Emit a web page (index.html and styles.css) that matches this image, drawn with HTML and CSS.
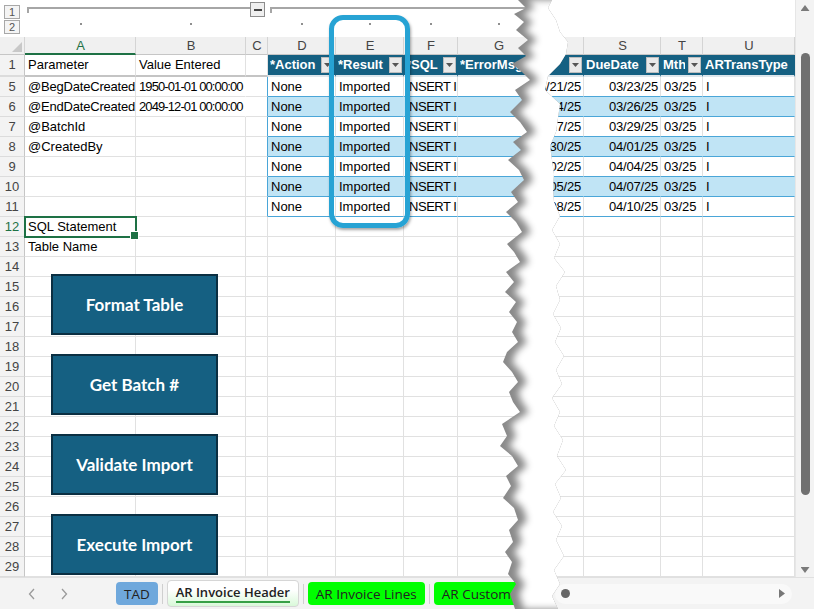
FILE: index.html
```html
<!DOCTYPE html>
<html lang="en">
<head>
<meta charset="UTF-8">
<meta name="viewport" content="width=device-width, initial-scale=1.0">
<title>AR Invoice Header</title>
<link rel="stylesheet" href="styles.css">
</head>
<body>

<div class="app">
  <div class="main">
    <div class="left">

      <div class="outline cols">
        <div class="levels"><span class="lvl">1</span><span class="lvl">2</span></div>
        <div class="bracket b-ab"></div>
        <div class="collapse"><span></span></div>
        <div class="bracket b-dg"></div>
        <div class="dot d-a"></div>
        <div class="dot d-b"></div>
        <div class="dot d-d"></div>
        <div class="dot d-e"></div>
        <div class="dot d-f"></div>
        <div class="dot d-g"></div>
      </div>

      <div class="sheet">
        <div class="row cols colhead">
          <div class="corner"><span></span></div>
          <div class="on">A</div><div>B</div><div>C</div><div>D</div><div>E</div><div>F</div><div>G</div><div>R</div><div>S</div><div>T</div><div>U</div>
        </div>

        <div class="row cols r1">
          <div class="rh">1</div><div>Parameter</div><div>Value Entered</div><div></div>
          <div class="th"><span class="tx">*Action</span><span class="dd"></span></div>
          <div class="th"><span class="tx">*Result</span><span class="dd"></span></div>
          <div class="th"><span class="tx">*SQL</span><span class="dd"></span></div>
          <div class="th"><span class="tx">*ErrorMsg</span><span class="dd"></span></div>
          <div class="th"><span class="tx"></span><span class="dd"></span></div>
          <div class="th"><span class="tx">DueDate</span><span class="dd"></span></div>
          <div class="th"><span class="tx">Mth</span><span class="dd"></span></div>
          <div class="th"><span class="tx">ARTransType</span></div>
        </div>

        <div class="row cols">
          <div class="rh">5</div><div class="fit">@BegDateCreated</div><div class="spill">1950-01-01 00:00:00</div><div class="edge"></div>
          <div class="t">None</div><div class="t">Imported</div><div class="t sql">INSERT INTO ARInvoiceHeader</div><div class="t"></div>
          <div class="t n">03/21/25</div><div class="t n">03/23/25</div><div class="t">03/25</div><div class="t">I</div>
        </div>
        <div class="row cols band">
          <div class="rh">6</div><div class="fit">@EndDateCreated</div><div class="spill">2049-12-01 00:00:00</div><div class="edge"></div>
          <div class="t">None</div><div class="t">Imported</div><div class="t sql">INSERT INTO ARInvoiceHeader</div><div class="t"></div>
          <div class="t n">03/24/25</div><div class="t n">03/26/25</div><div class="t">03/25</div><div class="t">I</div>
        </div>
        <div class="row cols">
          <div class="rh">7</div><div>@BatchId</div><div></div><div class="edge"></div>
          <div class="t">None</div><div class="t">Imported</div><div class="t sql">INSERT INTO ARInvoiceHeader</div><div class="t"></div>
          <div class="t n">03/27/25</div><div class="t n">03/29/25</div><div class="t">03/25</div><div class="t">I</div>
        </div>
        <div class="row cols band">
          <div class="rh">8</div><div>@CreatedBy</div><div></div><div class="edge"></div>
          <div class="t">None</div><div class="t">Imported</div><div class="t sql">INSERT INTO ARInvoiceHeader</div><div class="t"></div>
          <div class="t n">03/30/25</div><div class="t n">04/01/25</div><div class="t">03/25</div><div class="t">I</div>
        </div>
        <div class="row cols">
          <div class="rh">9</div><div></div><div></div><div class="edge"></div>
          <div class="t">None</div><div class="t">Imported</div><div class="t sql">INSERT INTO ARInvoiceHeader</div><div class="t"></div>
          <div class="t n">04/02/25</div><div class="t n">04/04/25</div><div class="t">03/25</div><div class="t">I</div>
        </div>
        <div class="row cols band">
          <div class="rh">10</div><div></div><div></div><div class="edge"></div>
          <div class="t">None</div><div class="t">Imported</div><div class="t sql">INSERT INTO ARInvoiceHeader</div><div class="t"></div>
          <div class="t n">04/05/25</div><div class="t n">04/07/25</div><div class="t">03/25</div><div class="t">I</div>
        </div>
        <div class="row cols">
          <div class="rh">11</div><div></div><div></div><div class="edge"></div>
          <div class="t">None</div><div class="t">Imported</div><div class="t sql">INSERT INTO ARInvoiceHeader</div><div class="t"></div>
          <div class="t n">04/08/25</div><div class="t n">04/10/25</div><div class="t">03/25</div><div class="t">I</div>
        </div>

        <div class="row cols"><div class="rh on">12</div><div class="sel">SQL Statement</div><div></div><div></div><div></div><div></div><div></div><div></div><div></div><div></div><div></div><div></div></div>
        <div class="row cols"><div class="rh">13</div><div>Table Name</div><div></div><div></div><div></div><div></div><div></div><div></div><div></div><div></div><div></div><div></div></div>
        <div class="row cols"><div class="rh">14</div><div></div><div></div><div></div><div></div><div></div><div></div><div></div><div></div><div></div><div></div><div></div></div>
        <div class="row cols"><div class="rh">15</div><div></div><div></div><div></div><div></div><div></div><div></div><div></div><div></div><div></div><div></div><div></div></div>
        <div class="row cols"><div class="rh">16</div><div></div><div></div><div></div><div></div><div></div><div></div><div></div><div></div><div></div><div></div><div></div></div>
        <div class="row cols"><div class="rh">17</div><div></div><div></div><div></div><div></div><div></div><div></div><div></div><div></div><div></div><div></div><div></div></div>
        <div class="row cols"><div class="rh">18</div><div></div><div></div><div></div><div></div><div></div><div></div><div></div><div></div><div></div><div></div><div></div></div>
        <div class="row cols"><div class="rh">19</div><div></div><div></div><div></div><div></div><div></div><div></div><div></div><div></div><div></div><div></div><div></div></div>
        <div class="row cols"><div class="rh">20</div><div></div><div></div><div></div><div></div><div></div><div></div><div></div><div></div><div></div><div></div><div></div></div>
        <div class="row cols"><div class="rh">21</div><div></div><div></div><div></div><div></div><div></div><div></div><div></div><div></div><div></div><div></div><div></div></div>
        <div class="row cols"><div class="rh">22</div><div></div><div></div><div></div><div></div><div></div><div></div><div></div><div></div><div></div><div></div><div></div></div>
        <div class="row cols"><div class="rh">23</div><div></div><div></div><div></div><div></div><div></div><div></div><div></div><div></div><div></div><div></div><div></div></div>
        <div class="row cols"><div class="rh">24</div><div></div><div></div><div></div><div></div><div></div><div></div><div></div><div></div><div></div><div></div><div></div></div>
        <div class="row cols"><div class="rh">25</div><div></div><div></div><div></div><div></div><div></div><div></div><div></div><div></div><div></div><div></div><div></div></div>
        <div class="row cols"><div class="rh">26</div><div></div><div></div><div></div><div></div><div></div><div></div><div></div><div></div><div></div><div></div><div></div></div>
        <div class="row cols"><div class="rh">27</div><div></div><div></div><div></div><div></div><div></div><div></div><div></div><div></div><div></div><div></div><div></div></div>
        <div class="row cols"><div class="rh">28</div><div></div><div></div><div></div><div></div><div></div><div></div><div></div><div></div><div></div><div></div><div></div></div>
        <div class="row cols"><div class="rh">29</div><div></div><div></div><div></div><div></div><div></div><div></div><div></div><div></div><div></div><div></div><div></div></div>

        <!-- macro buttons float over the grid -->
        <div class="shapes">
          <div class="btn">Format Table</div>
          <div class="btn">Get Batch #</div>
          <div class="btn">Validate Import</div>
          <div class="btn">Execute Import</div>
        </div>
      </div>
    </div>

    <div class="vscroll">
      <span class="arrow-up"></span>
      <span class="thumb"></span>
      <span class="arrow-down"></span>
    </div>
  </div>

  <div class="tabs">
    <div class="nav">
      <svg viewBox="0 0 8 12"><polyline points="6,1 1.5,6 6,11" fill="none" stroke="#9a9a9a" stroke-width="1.3"/></svg>
      <svg viewBox="0 0 8 12"><polyline points="2,1 6.5,6 2,11" fill="none" stroke="#9a9a9a" stroke-width="1.3"/></svg>
    </div>
    <div class="tab tad">TAD</div>
    <span class="sep"></span>
    <div class="tab active"><span class="label">AR Invoice Header</span></div>
    <span class="sep"></span>
    <div class="tab green">AR Invoice Lines</div>
    <span class="sep"></span>
    <div class="tab green">AR Customers</div>
    <div class="hscroll">
      <span class="knob"></span>
      <span class="arrow-right"></span>
    </div>
  </div>

  <div class="focus-ring"></div>

  <svg class="tear" width="90" height="609" viewBox="0 0 90 609">
    <defs>
      <clipPath id="gap">
        <path id="gapShape" d="M28,0 L36,8 L24,14 L34,22 L26,30 L38,40 L28,48 L36,56 L22,64 L32,72 L40,80 L25,90 L32,100 L20,112 L30,122 L37,132 L23,142 L31,150 L18,160 L29,170 L34,180 L21,192 L28,202 L16,212 L26,222 L32,232 L17,244 L24,252 L30,262 L16,272 L24,282 L15,292 L26,302 L19,312 L27,322 L22,332 L28,342 L17,352 L13,362 L22,372 L28,382 L19,392 L23,402 L30,412 L12,424 L17,436 L10,446 L22,456 L28,466 L16,476 L21,486 L13,498 L24,508 L28,520 L19,530 L23,542 L15,552 L22,562 L18,574 L26,584 L20,594 L25,609 L68,609 L62,596 L70,584 L64,570 L74,556 L66,540 L72,526 L63,512 L71,498 L65,484 L76,470 L67,456 L73,440 L64,426 L70,412 L62,398 L72,384 L66,370 L74,356 L65,342 L71,328 L63,314 L70,300 L66,286 L75,272 L64,258 L70,244 L62,230 L70,216 L64,202 L63,188 L64,174 L62,160 L60,146 L66,132 L68,118 L70,104 L55,90 L58,76 L70,64 L76,54 L78,42 L70,32 L66,20 L58,8 L62,0 Z"/>
      </clipPath>
      <filter id="soft" x="-50%" y="-5%" width="200%" height="110%">
        <feGaussianBlur stdDeviation="3.5"/>
      </filter>
    </defs>
    <use href="#gapShape" fill="#8a8a8a"/>
    <g clip-path="url(#gap)">
      <path fill="#fff" filter="url(#soft)" d="M37,0 L45,8 L33,14 L43,22 L35,30 L47,40 L37,48 L45,56 L31,64 L41,72 L49,80 L34,90 L41,100 L29,112 L39,122 L46,132 L32,142 L40,150 L27,160 L38,170 L43,180 L30,192 L37,202 L25,212 L35,222 L41,232 L26,244 L33,252 L39,262 L25,272 L33,282 L24,292 L35,302 L28,312 L36,322 L31,332 L37,342 L26,352 L22,362 L31,372 L37,382 L28,392 L32,402 L39,412 L21,424 L26,436 L19,446 L31,456 L37,466 L25,476 L30,486 L22,498 L33,508 L37,520 L28,530 L32,542 L24,552 L31,562 L27,574 L35,584 L29,594 L34,609 L95,609 L95,0 Z"/>
    </g>
  </svg>
</div>

</body>
</html>
```

FILE: styles.css
```css
* {
  box-sizing: border-box;
}
body {
  margin: 0;
  background: #fff;
  font-family: "Liberation Sans", Arial, sans-serif;
}
.app {
  position: relative;
  width: 814px;
  height: 609px;
  overflow: hidden;
  display: flex;
  flex-direction: column;
}
.main {
  display: flex;
  height: 577px;
}
.left {
  width: 795px;
  display: flex;
  flex-direction: column;
}
.cols {
  display: grid;
  grid-template-columns: 25px 111px 110px 22px 68px 68px 54px 82px 44px 77px 42px 92px;
}

/* outline (grouping) strip */
.outline {
  height: 37px;
  grid-template-rows: 18px 19px;
}
.levels {
  grid-row: 1 / 3;
  grid-column: 1;
  display: flex;
  flex-direction: column;
  gap: 1px;
  padding: 5px 0 0 4px;
}
.lvl {
  width: 16px;
  height: 14px;
  border: 1px solid #a8a8a8;
  background: #f4f4f4;
  color: #555;
  font-size: 11px;
  line-height: 12px;
  text-align: center;
}
.bracket {
  grid-row: 1;
  margin-top: 7px;
  height: 6px;
  border-top: 2px solid #a6a6a6;
  border-left: 2px solid #a6a6a6;
}
.b-ab {
  grid-column: 2 / 4;
  margin-left: 2px;
  margin-right: -4px;
}
.b-dg {
  grid-column: 5 / 9;
  margin-left: 2px;
}
.collapse {
  grid-row: 1;
  grid-column: 4;
  margin: 2px 0 0 4px;
  width: 15px;
  height: 15px;
  border: 1px solid #8c8c8c;
  background: #efefef;
  display: flex;
  align-items: center;
  justify-content: center;
}
.collapse span {
  width: 8px;
  height: 2px;
  background: #444;
}
.dot {
  grid-row: 2;
  justify-self: center;
  width: 2px;
  height: 2px;
  margin-top: 5px;
  background: #8f8f8f;
}
.d-a { grid-column: 2; }
.d-b { grid-column: 3; }
.d-d { grid-column: 5; }
.d-e { grid-column: 6; }
.d-f { grid-column: 7; }
.d-g { grid-column: 8; }

/* grid */
.sheet {
  position: relative;
  height: 540px;
}
.row > div {
  height: 20px;
  padding: 0 2px 0 3px;
  border-right: 1px solid #e1e1e1;
  border-bottom: 1px solid #e1e1e1;
  font-size: 13px;
  line-height: 19px;
  white-space: nowrap;
  overflow: hidden;
  color: #000;
}
.colhead > div {
  height: 18px;
  background: #f0f0f0;
  border-right-color: #d4d4d4;
  border-bottom-color: #c6c6c6;
  text-align: center;
  font-size: 13px;
  line-height: 17px;
  color: #444;
}
.colhead > .on {
  color: #1e7145;
  border-bottom: 2px solid #1e7145;
}
.colhead > .corner {
  display: flex;
  align-items: flex-end;
  justify-content: flex-end;
  padding: 0 2px 2px 0;
}
.corner span {
  width: 10px;
  height: 10px;
  background: #c8c8c8;
  clip-path: polygon(100% 0, 100% 100%, 0 100%);
}
.row > .rh {
  padding: 0;
  background: #f3f3f3;
  color: #444;
  text-align: center;
  border-right-color: #c6c6c6;
  border-bottom-color: #dcdcdc;
}
.row > .rh.on {
  color: #1e7145;
}
.r1 > div {
  height: 22px;
  line-height: 20px;
  border-bottom: 2px solid #c4c4c4;
}
.row > .th {
  display: flex;
  align-items: center;
  gap: 3px;
  padding: 0 1px 0 2px;
  background: #156082;
  color: #fff;
  font-weight: bold;
  border-right-color: #156082;
  border-bottom-color: #dde6ec;
}
.th .tx {
  flex: 1;
  overflow: hidden;
}
.dd {
  flex: none;
  width: 13px;
  height: 16px;
  background: #e9e9e9;
  border: 1px solid #bdbdbd;
  display: flex;
  align-items: center;
  justify-content: center;
}
.dd::after {
  content: "";
  width: 7px;
  height: 4px;
  background: #555;
  clip-path: polygon(0 0, 100% 0, 50% 100%);
}
.row > .t {
  border-bottom-color: #4aa6d8;
}
.band > .t {
  background: #c0e4f5;
  border-right-color: #c0e4f5;
}
.row > .edge {
  border-right-color: #4aa6d8;
}
.row > .n {
  display: flex;
  justify-content: flex-end;
  letter-spacing: -0.2px;
}
.row > .sql {
  padding-left: 2px;
  letter-spacing: -0.5px;
}
.row > .fit {
  letter-spacing: -0.2px;
}
.row > .spill {
  overflow: visible;
  letter-spacing: -0.9px;
  border-right-color: transparent;
}
.row > .sel {
  position: relative;
  z-index: 2;
  overflow: visible;
  outline: 2px solid #1e7145;
  outline-offset: -1px;
}
.sel::after {
  content: "";
  position: absolute;
  right: -4px;
  bottom: -4px;
  width: 7px;
  height: 7px;
  background: #1e7145;
  border: 1px solid #fff;
}

/* macro buttons */
.shapes {
  position: absolute;
  left: 51px;
  top: 237px;
  display: flex;
  flex-direction: column;
  gap: 19px;
}
.btn {
  width: 167px;
  height: 61px;
  background: #156082;
  border: 2px solid #0b2f42;
  color: #fff;
  font-family: Lato, "Open Sans", sans-serif;
  font-weight: 700;
  font-size: 17px;
  display: flex;
  align-items: center;
  justify-content: center;
}

/* vertical scrollbar */
.vscroll {
  width: 19px;
  background: #f3f3f3;
  border-left: 1px solid #e6e6e6;
  display: flex;
  flex-direction: column;
  align-items: center;
}
.arrow-up {
  margin-top: 5px;
  width: 9px;
  height: 6px;
  background: #7a7a7a;
  clip-path: polygon(50% 0, 100% 100%, 0 100%);
}
.thumb {
  margin-top: 42px;
  width: 9px;
  height: 442px;
  border-radius: 5px;
  background: #707070;
}
.arrow-down {
  margin-top: auto;
  margin-bottom: 4px;
  width: 9px;
  height: 6px;
  background: #7a7a7a;
  clip-path: polygon(0 0, 100% 0, 50% 100%);
}

/* sheet tabs */
.tabs {
  height: 32px;
  background: #f3f3f3;
  border-top: 1px solid #e0e0e0;
  display: flex;
  align-items: center;
  font-family: "Open Sans", sans-serif;
  font-size: 13.5px;
  color: #222;
}
.nav {
  width: 110px;
  display: flex;
  gap: 24px;
  padding-left: 28px;
}
.nav svg {
  width: 8px;
  height: 12px;
}
.tab {
  height: 23px;
  padding: 0 8px;
  border-radius: 4px;
  display: flex;
  align-items: center;
  white-space: nowrap;
}
.tad {
  margin-left: 6px;
  background: #6fa8dc;
}
.sep {
  width: 1px;
  height: 20px;
  margin: 0 4px;
  background: #cfcfcf;
}
.active {
  width: 132px;
  height: 27px;
  justify-content: center;
  background: linear-gradient(#fff 35%, #d9f9d9);
  border: 1px solid #d6d6d6;
  font-weight: 600;
  font-size: 13px;
}
.active .label {
  line-height: 17px;
  border-bottom: 2px solid #37a046;
}
.green {
  background: #00ff00;
}
.hscroll {
  margin-left: auto;
  margin-right: 22px;
  width: 237px;
  height: 20px;
  padding: 0 7px 0 6px;
  border-radius: 10px;
  background: #f9f9f9;
  display: flex;
  align-items: center;
  justify-content: space-between;
}
.knob {
  width: 9px;
  height: 9px;
  border-radius: 50%;
  background: #666;
}
.arrow-right {
  width: 6px;
  height: 9px;
  background: #777;
  clip-path: polygon(0 0, 100% 50%, 0 100%);
}

/* callout around the Result column */
.focus-ring {
  position: absolute;
  left: 329px;
  top: 15px;
  width: 81px;
  height: 213px;
  border: 5px solid #27a3d4;
  border-radius: 14px;
  box-shadow: 1px 2px 3px rgba(0, 0, 0, 0.35);
  z-index: 5;
}

/* torn paper gap */
.tear {
  position: absolute;
  left: 490px;
  top: 0;
  z-index: 10;
}
```
